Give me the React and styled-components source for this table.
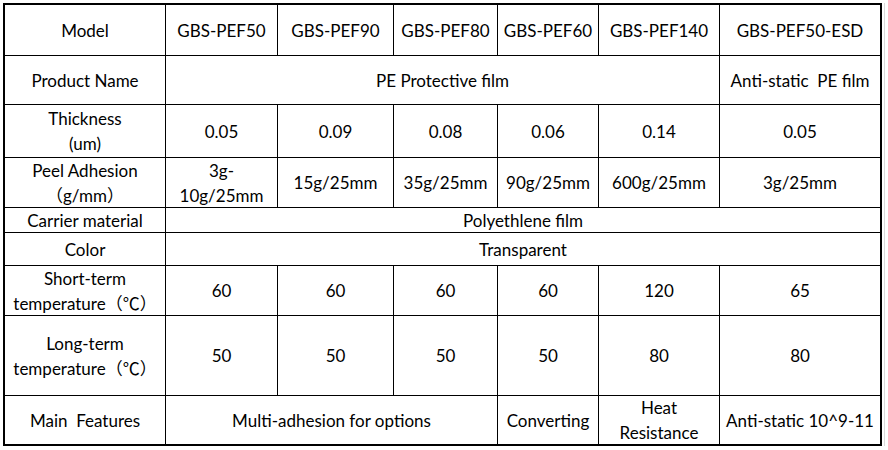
import React from 'react';
import styled, { createGlobalStyle } from 'styled-components';

const GlobalStyle = createGlobalStyle`
  html, body {
    margin: 0;
    padding: 0;
    background: #ffffff;
  }
  body {
    font-family: Lato, "Noto Sans CJK SC", sans-serif;
  }
`;

const Page = styled.div`
  padding: 3px 0 0 3px;
  width: 888px;
  height: 450px;
  box-sizing: border-box;
`;

const Frame = styled.div`
  display: inline-block;
  padding-right: 2px;
  border-right: 1px solid #d9d9d9;
`;

const Sheet = styled.div`
  display: grid;
  grid-template-columns: 160px 111px 115px 103px 100px 120px 160px;
  grid-template-rows: 50px 48px 52px 49px 24px 32px 49px 79px 48px;
  gap: 1px;
  width: max-content;
  background: #000000;
  border: 2px solid #000000;
`;

const Cell = styled.div`
  grid-column: ${(p) => (p.span ? `span ${p.span}` : 'auto')};
  background: #ffffff;
  display: flex;
  align-items: center;
  justify-content: center;
  text-align: center;
  white-space: pre;
  font-size: 17px;
  line-height: 25px;
  color: #000000;
`;

const rows = [
  ['Model', 'GBS-PEF50', 'GBS-PEF90', 'GBS-PEF80', 'GBS-PEF60', 'GBS-PEF140', 'GBS-PEF50-ESD'],
  ['Product Name', ['PE Protective film', 5], 'Anti-static  PE film'],
  ['Thickness\n(um)', '0.05', '0.09', '0.08', '0.06', '0.14', '0.05'],
  ['Peel Adhesion\n（g/mm）', '3g-\n10g/25mm', '15g/25mm', '35g/25mm', '90g/25mm', '600g/25mm', '3g/25mm'],
  ['Carrier material', ['Polyethlene film', 6]],
  ['Color', ['Transparent', 6]],
  ['Short-term\ntemperature（℃）', '60', '60', '60', '60', '120', '65'],
  ['Long-term\ntemperature（℃）', '50', '50', '50', '50', '80', '80'],
  ['Main  Features', ['Multi-adhesion for options', 3], 'Converting', 'Heat\nResistance', 'Anti-static 10^9-11'],
];

export default function App() {
  return (
    <>
      <GlobalStyle />
      <Page>
        <Frame>
          <Sheet>
            {rows.map((row, r) =>
              row.map((item, c) => {
                const [text, span] = Array.isArray(item) ? item : [item, 1];
                return (
                  <Cell key={`${r}-${c}`} span={span}>
                    {text}
                  </Cell>
                );
              })
            )}
          </Sheet>
        </Frame>
      </Page>
    </>
  );
}
